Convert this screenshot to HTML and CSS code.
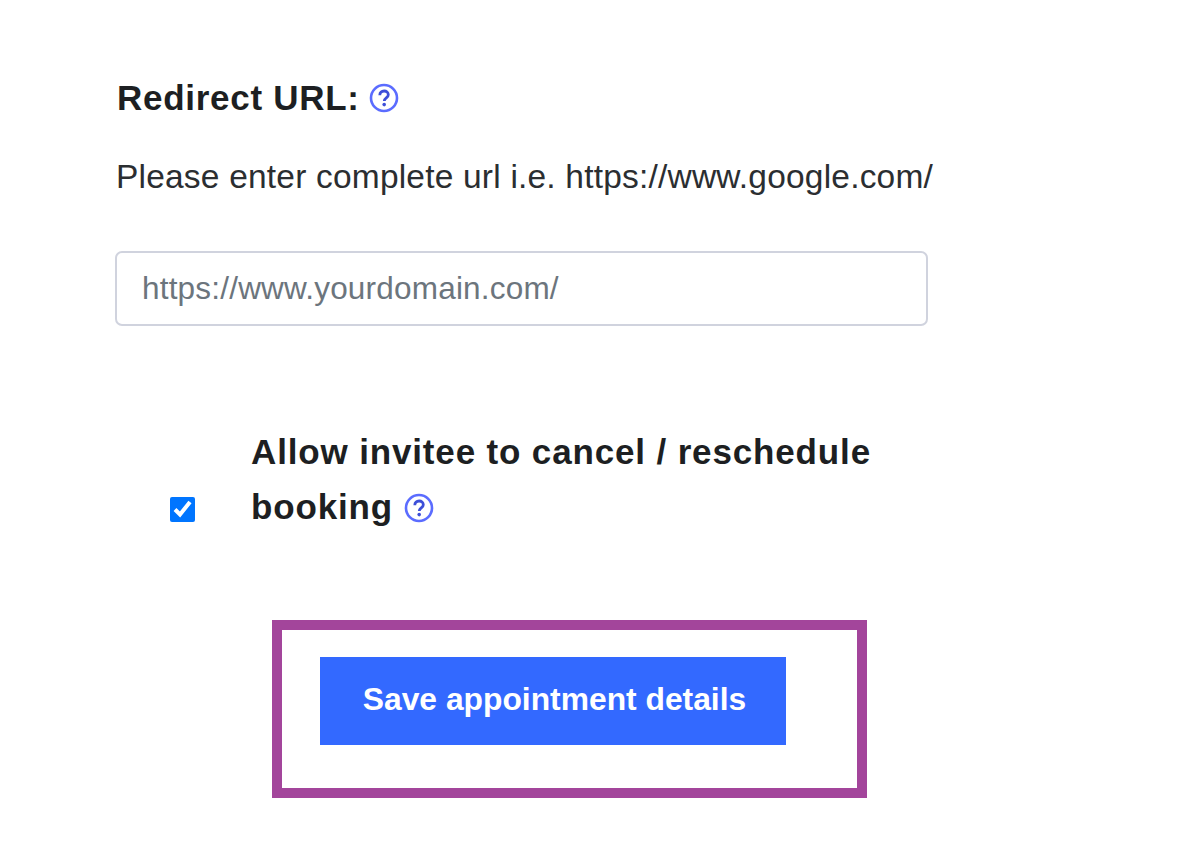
FILE: index.html
```html
<!DOCTYPE html>
<html lang="en">
<head>
<meta charset="utf-8">
<title>Appointment details</title>
<link rel="stylesheet" href="styles.css">
</head>
<body>
<main class="form">
  <div class="heading">
    <span>Redirect URL:</span>
    <svg class="help" viewBox="0 0 30 30" aria-hidden="true"><circle cx="15" cy="15" r="13" fill="none" stroke="#5b6cff" stroke-width="2.6"/><path d="M10.8 12.2c0-2.6 1.9-4.2 4.3-4.2s4.2 1.5 4.2 3.7c0 3.2-4 3.2-4 6.4" fill="none" stroke="#3d4fd8" stroke-width="2.8"/><circle cx="15.2" cy="21.6" r="1.8" fill="#3d4fd8"/></svg>
  </div>
  <p class="hint">Please enter complete url i.e. https://www.google.com/</p>
  <input class="url" type="text" placeholder="https://www.yourdomain.com/">
  <div class="allow">
    <input class="check" type="checkbox" checked>
    <label class="allow-label">Allow invitee to cancel / reschedule booking
      <svg class="help inline" viewBox="0 0 30 30" aria-hidden="true"><circle cx="15" cy="15" r="13" fill="none" stroke="#5b6cff" stroke-width="2.6"/><path d="M10.8 12.2c0-2.6 1.9-4.2 4.3-4.2s4.2 1.5 4.2 3.7c0 3.2-4 3.2-4 6.4" fill="none" stroke="#3d4fd8" stroke-width="2.8"/><circle cx="15.2" cy="21.6" r="1.8" fill="#3d4fd8"/></svg>
    </label>
  </div>
  <div class="frame">
    <button class="save" type="button">Save appointment details</button>
  </div>
</main>
</body>
</html>
```
FILE: styles.css
```css
* { box-sizing: border-box; }
html, body { margin: 0; background: #fff; }
body { font-family: "Liberation Sans", Arial, sans-serif; color: #212529; height: 844px; overflow: hidden; }
.form { padding: 78px 0 0 115px; width: 1180px; }
.heading { display: flex; align-items: center; gap: 9px; height: 40px; padding-left: 2px; font-size: 35px; font-weight: 700; color: #1d1f22; letter-spacing: 0.72px; }
.help { width: 30px; height: 30px; flex: none; }
.hint { margin: 39px 0 0 1px; font-size: 33.5px; line-height: 40px; color: #2b2e31; letter-spacing: 0.2px; }
.url { display: block; width: 813px; height: 75px; margin-top: 54px; padding: 0 25px; border: 2px solid #d0d3de; border-radius: 7px; font: 31.5px "Liberation Sans", Arial, sans-serif; letter-spacing: 0.2px; background: #fff; }
.url::placeholder { color: #6c757d; opacity: 1; }
.allow { display: flex; align-items: flex-end; margin-top: 98px; padding-left: 55px; }
.check { width: 25px; height: 25px; margin: 0 0 12px; accent-color: #0075ff; flex: none; }
.allow-label { width: 660px; margin-left: 56px; font-size: 35px; font-weight: 700; line-height: 55px; color: #1d1f22; letter-spacing: 0.85px; }
.help.inline { vertical-align: -4px; margin-left: 0; }
.frame { width: 595px; height: 178px; margin: 86px 0 0 157px; padding: 27px 0 0 38px; border: 10px solid #a3459b; }
.save { display: block; width: 466px; height: 88px; padding: 0 0 4px 3px; border: 0; background: #3369ff; color: #fff; font: 700 31.8px "Liberation Sans", Arial, sans-serif; }
```
